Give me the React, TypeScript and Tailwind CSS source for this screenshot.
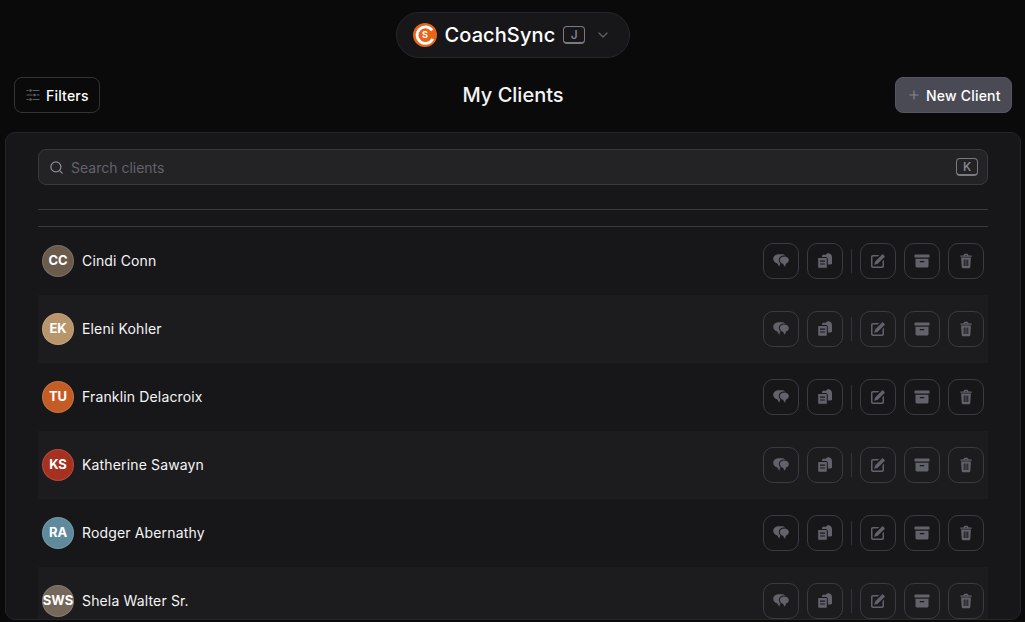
import React from "react";
import { Plus, Search, ChevronDown } from "lucide-react";

const clients = [
  { initials: "CC", name: "Cindi Conn", color: "bg-[#6b5b4d]" },
  { initials: "EK", name: "Eleni Kohler", color: "bg-[#b8956a]" },
  { initials: "TU", name: "Franklin Delacroix", color: "bg-[#c45c26]" },
  { initials: "KS", name: "Katherine Sawayn", color: "bg-[#a63120]" },
  { initials: "RA", name: "Rodger Abernathy", color: "bg-[#5f8a9c]" },
  { initials: "SWS", name: "Shela Walter Sr.", color: "bg-[#75675a]" },
];

const Logo = () => (
  <svg viewBox="0 0 24 24" className="w-[24px] h-[24px] shrink-0">
    <circle cx="12" cy="12" r="12" fill="#e8651a" />
    <path d="M19.8 15.800A8.300 8.300 0 1 1 19.200 7.400" fill="none" stroke="#fff" strokeWidth="2.800" />
    <circle cx="12" cy="12" r="5.400" fill="#e8651a" />
    <text x="12" y="15.200" textAnchor="middle" fontSize="9" fontWeight="700" fill="#fff" fontFamily="Inter, sans-serif">S</text>
  </svg>
);

const FiltersIcon = () => (
  <svg viewBox="0 0 14 14" className="w-[14px] h-[14px] text-[#5f5f68]" fill="currentColor">
    <rect x="0.500" y="2" width="2" height="1" />
    <circle cx="4.500" cy="2.500" r="1.300" />
    <rect x="6.500" y="2" width="7" height="1" />
    <rect x="0.500" y="6.500" width="6" height="1" />
    <circle cx="8.500" cy="7" r="1.300" />
    <rect x="10.500" y="6.500" width="3" height="1" />
    <rect x="0.500" y="11" width="2" height="1" />
    <circle cx="4.500" cy="11.500" r="1.300" />
    <rect x="6.500" y="11" width="7" height="1" />
  </svg>
);

const ChatIcon = () => (
  <svg viewBox="0 0 16 16" className="w-[16px] h-[16px]" fill="currentColor">
    <path d="M6 1.200h3c1.300 0 2.500.5 3.100 1.300H11c-3 0-5.200 1.900-5.200 4.400 0 1.400.6 2.500 1.500 3.300L6.200 13.800 4.300 10.500C1.900 10 .2 8.200.2 5.800.2 3.100 2.800 1.200 6 1.200z" />
    <path d="M11.300 3.600c2.500 0 4.500 1.500 4.500 3.500 0 1.700-1.200 3-2.800 3.400l-1.100 3.300-2-3.100C7.900 10.400 6.800 8.900 6.800 7.100c0-2.100 2-3.500 4.500-3.500z" />
  </svg>
);

const CopyIcon = () => (
  <svg viewBox="0 0 16 16" className="w-[16px] h-[16px]" fill="currentColor">
    <path d="M9 1.800C9.300.9 10.200.300 11.200.300 13.300.300 15 2 15 4.100v6.100c0 .700-.5 1.200-1.200 1.200H5V3.200c0-.8.600-1.400 1.400-1.400z" />
    <path
      fillRule="evenodd"
      stroke="#17171a"
      strokeWidth="1"
      d="M1.800 4.500h7.400c.6 0 1.100.5 1.100 1.100v8.600c0 .6-.5 1.100-1.100 1.100H1.800c-.6 0-1.100-.5-1.100-1.100V5.600c0-.6.500-1.100 1.100-1.100z"
    />
    <path fill="#17171a" d="M3 7.600h5v1.100H3zM3 10.400h5v1.100H3z" />
  </svg>
);

const EditIcon = () => (
  <svg viewBox="0 0 16 16" className="w-[16px] h-[16px]" fill="currentColor">
    <path d="M3 2h6.300L7.800 3.500H3.200c-.4 0-.7.300-.7.700v8.600c0 .4.300.7.700.7h8.600c.4 0 .7-.3.700-.7V8.200L14 6.700v6.300c0 1.100-.9 2-2 2H3c-1.100 0-2-.9-2-2V4c0-1.100.9-2 2-2z" />
    <path d="M12.600 1l2.400 2.400-7.500 7.500-3.300.9.900-3.300z" />
  </svg>
);

const ArchiveIcon = () => (
  <svg viewBox="0 0 16 16" className="w-[16px] h-[16px]" fill="currentColor">
    <rect x="0.500" y="1.500" width="15" height="3" rx="0.600" />
    <path fillRule="evenodd" d="M1.500 5.800h13v7.200c0 .9-.7 1.500-1.500 1.500H3c-.8 0-1.500-.6-1.500-1.500zM5.800 8v1.300h4.400V8z" />
  </svg>
);

const TrashIcon = () => (
  <svg viewBox="0 0 16 16" className="w-[16px] h-[16px]" fill="currentColor">
    <path d="M5.500 2.400C5.600 1.300 6.400.700 7.300.700h1.400c.9 0 1.700.600 1.800 1.700h3.200v1.300H2.300V2.400zM6.800 2.400h2.400c0-.3-.2-.5-.5-.5H7.300c-.3 0-.5.200-.5.500z" />
    <path fillRule="evenodd" d="M3.100 4.500h9.800l-.6 9.200c-.1.900-.8 1.600-1.700 1.600H5.400c-.9 0-1.600-.7-1.700-1.600zM5.700 6.500v6.500h1V6.500zM7.500 6.500v6.500h1V6.500zM9.300 6.500v6.500h1V6.500z" />
  </svg>
);

const ActionButton = ({ children }: { children: React.ReactNode }) => (
  <button className="w-[36px] h-[36px] rounded-[10px] border border-[#3a3a40] flex items-center justify-center text-[#62626b]">
    {children}
  </button>
);

const Kbd = ({ children }: { children: React.ReactNode }) => (
  <span className="w-[22px] h-[18px] rounded-[4px] border border-[#7a7a80] border-b-2 flex items-center justify-center text-[12px] font-medium text-[#8b8b92]">
    {children}
  </span>
);

const App = () => {
  return (
    <div className="w-[1025px] h-[622px] overflow-hidden bg-[#0a0a0b] flex flex-col font-['Inter',sans-serif] text-white">
      <div className="flex justify-center pt-[12px]">
        <div className="w-[234px] h-[46px] rounded-full bg-[#17171a] border border-[#28282c] flex items-center pl-[16px]">
          <Logo />
          <span className="ml-[8px] text-[20px] font-medium tracking-[0.1px] text-white">CoachSync</span>
          <span className="ml-[8px]"><Kbd>J</Kbd></span>
          <ChevronDown className="ml-[10px] w-[16px] h-[16px] text-[#5f5f68]" />
        </div>
      </div>

      <div className="grid grid-cols-[1fr_auto_1fr] items-center pl-[14px] pr-[13px] mt-[19px]">
        <button className="w-[86px] h-[36px] rounded-[8px] border border-[#333338] flex items-center pl-[11px] gap-[6px] text-[14px] font-medium tracking-[0.2px]">
          <FiltersIcon />
          Filters
        </button>
        <h1 className="text-[20px] font-medium text-[#f4f4f5]">My Clients</h1>
        <button className="w-[117px] h-[36px] justify-self-end rounded-[8px] bg-[#4a4a55] border border-[#55555f] flex items-center pl-[11px] gap-[5px] text-[14px] font-medium tracking-[0.2px]">
          <Plus className="w-[14px] h-[14px] text-[#85858e]" />
          New Client
        </button>
      </div>

      <div className="mt-[19px] ml-[5px] w-[1016px] h-[488px] shrink-0 rounded-[10px] border border-[#26262a] bg-[#17171a] overflow-hidden px-[32px] pt-[16px]">
        <div className="h-[36px] rounded-[8px] bg-[#232326] border border-[#39393e] flex items-center pl-[10px] pr-[9px]">
          <Search className="w-[15px] h-[15px] text-[#8b8b92]" />
          <span className="ml-[7px] text-[14px] text-[#62626b] flex-1">Search clients</span>
          <Kbd>K</Kbd>
        </div>
        <div className="mt-[24px] h-[18px] border-t border-b border-[#3a3a3f]" />
        <div className="flex flex-col">
          {clients.map((client, i) => (
            <div
              key={client.name}
              className={`h-[68px] shrink-0 flex items-center pl-[4px] pr-[4px] ${i % 2 === 1 ? "bg-[#1c1c1f]" : ""}`}
            >
              <div className={`w-[32px] h-[32px] rounded-full ${client.color} border border-[#ffffff22] flex items-center justify-center pb-[1px] text-[13px] font-bold shrink-0`}>
                {client.initials}
              </div>
              <span className="ml-[8px] pb-[2px] text-[14px] font-normal tracking-[0.15px] text-[#f4f4f5] flex-1">{client.name}</span>
              <div className="flex items-center gap-[8px]">
                <ActionButton><ChatIcon /></ActionButton>
                <ActionButton><CopyIcon /></ActionButton>
                <div className="w-px h-[24px] bg-[#333338]" />
                <ActionButton><EditIcon /></ActionButton>
                <ActionButton><ArchiveIcon /></ActionButton>
                <ActionButton><TrashIcon /></ActionButton>
              </div>
            </div>
          ))}
        </div>
      </div>
    </div>
  );
};

export default App;
